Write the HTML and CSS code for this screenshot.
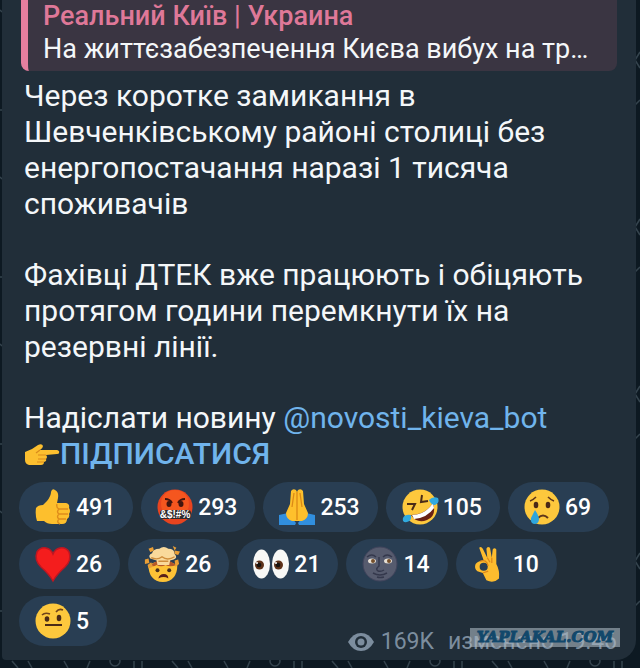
FILE: index.html
```
<!DOCTYPE html>
<html lang="uk">
   <head>
      <meta charset="utf-8">
      <title>Реальний Київ | Украина</title>
      <link rel="stylesheet" href="styles.css">
   </head>
   <body>
      <main class="message">
         <div class="reply">
            <div class="reply-name">Реальний Київ | Украина</div>
            <div class="reply-text">На життєзабезпечення Києва вибух на тр…</div>
         </div>
         <div class="text">
            <p>Через коротке замикання в<br>Шевченківському районі столиці без<br>енергопостачання наразі 1 тисяча<br>споживачів</p>
            <p>Фахівці ДТЕК вже працюють і обіцяють<br>протягом години перемкнути їх на<br>резервні лінії.</p>
            <p>Надіслати новину <a href="#bot">@novosti_kieva_bot</a><br><svg class="hand" viewBox="0 0 36 26"><path d="M1 10 L8 7 L14 3 Q18 1 19 4 Q19 6 16 8 L33 8 Q36 9 35 11 Q35 12 33 12 L22 13 Q24 15 22 17 Q23 19 20 20 Q20 23 17 23 L5 23 Q1 22 1 18 Z" fill="#fcbf2f"/><path d="M14 13 H22 M14 17 H22 M13 20 H20 M16 8 L12 11" stroke="#d98a1d" stroke-width="1.2" fill="none"/></svg><a class="subscribe" href="#subscribe">ПІДПИСАТИСЯ</a></p>
         </div>
         <div class="reactions">
            <button class="reaction">
               <svg viewBox="0 0 36 36"><path d="M1 19 Q3 16 8 16 L12 12 Q16 7 16 3 Q17 -1 20 1 Q24 3 23 9 L22 14 L31 14 Q35 15 34 19 Q36 22 34 25 Q35 28 32 30 Q32 35 27 35 L17 35 Q12 35 9 32 L2 32 Q0 26 1 19 Z" fill="#fdbf2d"/><path d="M33 20 H24 Q21 19 22 15 M33 25 H24 Q21 23 24 20 M31 30 H24 Q21 28 24 25 M25 35 Q21 33 24 30" stroke="#de8c1b" stroke-width="1.4" fill="none"/></svg>
               <span>491</span>
            </button>
            <button class="reaction">
               <svg viewBox="0 0 36 36"><circle cx="18" cy="18" r="17.5" fill="#e8441f"/><circle cx="18" cy="15" r="14" fill="#f5561f"/><path d="M8 10 Q13 10 15 14 M28 10 Q23 10 21 14" stroke="#42150f" stroke-width="2" fill="none"/><ellipse cx="12" cy="15" rx="2.5" ry="3" fill="#42150f"/><ellipse cx="24" cy="15" rx="2.5" ry="3" fill="#42150f"/><rect x="3" y="21" width="31" height="9" rx="3" fill="#302c2d"/><text class="curse" x="18" y="29" text-anchor="middle">&amp;$!#%</text></svg>
               <span>293</span>
            </button>
            <button class="reaction">
               <svg viewBox="0 0 36 36"><path d="M0 26 L9 24 L17 34 L16 36 L0 36 Z M36 26 L27 24 L19 34 L20 36 L36 36 Z" fill="#318fdf"/><path d="M12 2 Q14 -1 17 1 L18 3 L19 1 Q22 -1 24 2 L25 15 L29 24 Q29 30 23 32 L18 32 L13 32 Q7 30 7 24 L11 15 Z" fill="#fec02c"/><path d="M18 3 V31 M15 4 L13 18 M21 4 L23 18" stroke="#dc8a16" stroke-width="1.3" fill="none"/></svg>
               <span>253</span>
            </button>
            <button class="reaction">
               <svg viewBox="0 0 36 36"><circle cx="18" cy="18" r="17.5" fill="#fdc83d"/><path d="M5 15 L13 15 L10 21 M20 6 L19 13 L26 12" stroke="#4b2b17" stroke-width="2" fill="none"/><path d="M9 26 Q23 26 31 14 Q35 27 25 31 Q15 35 9 26 Z" fill="#6a2114"/><path d="M10 26 Q23 26 31 14 L32 19 Q25 29 12 30 Z" fill="#fff"/><path d="M27 11 Q31 7 36 9 Q38 14 33 16 Q29 16 27 11 Z M9 26 Q10 32 5 33 Q0 34 1 29 Q3 25 9 26 Z" fill="#30aae0"/></svg>
               <span>105</span>
            </button>
            <button class="reaction">
               <svg viewBox="0 0 36 36"><circle cx="18" cy="18" r="17.5" fill="#fdc83d"/><path d="M6 12 Q9 11 12 8 M24 8 Q27 11 30 12" stroke="#60361a" stroke-width="1.6" fill="none"/><ellipse cx="12" cy="16" rx="2.3" ry="3.3" fill="#4a2817"/><ellipse cx="24" cy="16" rx="2.3" ry="3.3" fill="#4a2817"/><path d="M14 29 Q19 24 24 29" stroke="#60361a" stroke-width="2" fill="none"/><path d="M11 21 Q15 27 15 30 Q15 35 10 35 Q6 34 7 29 Z" fill="#2fa5dc"/></svg>
               <span>69</span>
            </button>
            <button class="reaction">
               <svg viewBox="0 0 36 36"><path d="M18 35 Q14 28 6 21 Q-1 14 2 6 Q5 1 11 2 Q16 3 18 8 Q20 3 25 2 Q31 1 34 6 Q37 14 30 21 Q22 28 18 35 Z" fill="#f41d1d" stroke="#bd1722" stroke-width="1.5"/></svg>
               <span>26</span>
            </button>
            <button class="reaction">
               <svg class="wide" viewBox="0 0 40 42"><path d="M5 22 Q5 40 21 41 Q37 40 37 22 L30 19 H12 Z" fill="#fdc236"/><path d="M7 22 L14 18 H29 L36 22 Q29 25 24 22 Q19 25 14 22 Q10 25 7 22 Z" fill="#b65829"/><path d="M7 15 Q4 11 9 9 Q10 4 17 4 Q22 0 27 4 Q34 4 34 10 Q38 14 33 16 L29 17 L28 22 H15 L14 17 Z" fill="#f9d99b"/><path d="M8 14 Q15 17 20 13 Q26 18 34 13 M16 18 H27" stroke="#cf8d3c" stroke-width="1.5" fill="none"/><path d="M5 4 L10 2 L11 6 L7 8 Z M32 1 L36 3 L34 6 Z M1 16 L5 15 L6 20 L1 21 Z M34 6 L40 7 L38 11 L34 10 Z M4 22 L8 19 L10 24 L5 26 Z M34 17 L38 16 L39 21 L35 24 Z" fill="#e99e35"/><circle cx="15" cy="28" r="2.2" fill="#49301e"/><circle cx="28" cy="28" r="2.2" fill="#49301e"/><path d="M16 37 Q17 32 22 32 Q27 32 27 37 Q22 34 16 37 Z" fill="#5a2019"/></svg>
               <span>26</span>
            </button>
            <button class="reaction">
               <svg viewBox="0 0 36 36"><ellipse cx="8.5" cy="18" rx="8.5" ry="14.5" fill="#f8f8f6"/><ellipse cx="27.5" cy="18" rx="8.5" ry="14.5" fill="#f8f8f6"/><circle cx="6.5" cy="19" r="4.5" fill="#5d3119"/><circle cx="25.5" cy="19" r="4.5" fill="#5d3119"/><circle cx="6" cy="19" r="2.3" fill="#17120f"/><circle cx="25" cy="19" r="2.3" fill="#17120f"/><circle cx="4" cy="17" r="1" fill="#fff"/><circle cx="23" cy="17" r="1" fill="#fff"/></svg>
               <span>21</span>
            </button>
            <button class="reaction">
               <svg viewBox="0 0 36 36"><circle cx="18" cy="18" r="17" fill="#565b6e" stroke="#41445c"/><path d="M5 11 Q10 7 14 11 M21 11 Q25 7 30 11 M17 11 V20 Q13 23 16 25 Q19 26 22 24 M11 27 Q18 31 25 27 M15 31 Q18 32 22 31" stroke="#34384c" stroke-width="1.5" fill="none"/><ellipse cx="10" cy="15" rx="4" ry="2.5" fill="#e6dfd4"/><ellipse cx="26" cy="15" rx="4" ry="2.5" fill="#e6dfd4"/><circle cx="11" cy="15" r="2" fill="#75502c"/><circle cx="27" cy="15" r="2" fill="#75502c"/></svg>
               <span>14</span>
            </button>
            <button class="reaction">
               <svg class="wide" viewBox="0 0 40 42"><path d="M8 3 Q10 1 12 4 L17 14 L16 4 Q17 1 20 3 L22 14 L23 5 Q25 2 27 5 L27 21 Q31 28 30 37 Q24 43 16 39 L12 31 L6 29 Q2 26 4 21 Q7 17 13 17 Z" fill="#fdbc2e"/><circle cx="13" cy="24" r="4.5" fill="#293e53"/><path d="M17 14 L20 19 M22 14 L22 20 M18 29 L12 31 M9 18 Q16 15 18 23" stroke="#dc871c" stroke-width="1.4" fill="none"/></svg>
               <span>10</span>
            </button>
            <button class="reaction">
               <svg viewBox="0 0 36 36"><circle cx="18" cy="18" r="17.5" fill="#fdc83d"/><path d="M7 12 Q10 9 15 11 M21 9 Q24 5 28 7" stroke="#70431b" stroke-width="1.6" fill="none"/><ellipse cx="12" cy="16" rx="2.3" ry="2.8" fill="#4b2b17"/><ellipse cx="24" cy="15" rx="2.3" ry="3.2" fill="#4b2b17"/><path d="M10 22 H27" stroke="#4b2b17" stroke-width="2"/></svg>
               <span>5</span>
            </button>
         </div>
         <footer class="info">
            <svg class="eye" viewBox="0 0 26 20"><path d="M0 10 Q5 1 13 1 Q21 1 26 10 Q21 19 13 19 Q5 19 0 10 Z" fill="#7c8d9e"/><circle cx="13" cy="10" r="6" fill="#212e39"/><circle cx="13" cy="10" r="3.5" fill="#7c8d9e"/></svg>
            <span class="views">169K</span>
            <span>изменено 19:46</span>
            <span class="watermark">YAPLAKAL.COM</span>
         </footer>
      </main>
   </body>
</html>
```
FILE: styles.css
```
body {
   margin: 0;
   background: #0d1922 url("data:image/svg+xml,%3Csvg xmlns='http://www.w3.org/2000/svg' width='160' height='167'%3E%3Cg fill='none' stroke='%2334434d' stroke-width='1.5'%3E%3Cpath d='M12 160l6 7M28 160l4 7M64 160l4 7M90 160l-3 7M0 10l2 2M160 52l-5 8 5 8M160 100l-5 5M134 160v7M142 160v7M0 110h3'/%3E%3Ccircle cx='115' cy='160' r='5'/%3E%3C/g%3E%3C/svg%3E");
   font-family: Roboto, "Noto Sans", sans-serif;
   color: #f4f7f9;
}
.message {
   margin: 0 4px 6px 2px;
   padding: 0 19px 4px;
   background: #212e39;
   border-radius: 0 0 20px 4px;
}
.reply {
   padding: 0 15px 5px;
   border-left: 7px solid #e57f9f;
   border-radius: 0 0 8px 8px;
   background: #3a3542;
   font-size: 27px;
   line-height: 33px;
   white-space: nowrap;
}
.reply-name {
   color: #df7898;
   font-weight: 500;
}
.text {
   padding: 7px 3px 0;
   font-size: 30px;
   line-height: 36px;
   white-space: nowrap;
}
.text p {
   margin: 0 0 35px;
}
.text p:last-child {
   margin-bottom: 0;
}
a {
   color: #70b4ec;
   text-decoration: none;
}
.subscribe {
   font-weight: 500;
}
.hand {
   width: 36px;
   height: 26px;
   vertical-align: -4px;
}
.reactions {
   display: flex;
   flex-wrap: wrap;
   gap: 7px 8px;
   margin: 10px -2px 0;
}
.reaction {
   display: flex;
   align-items: center;
   gap: 5px;
   height: 50px;
   padding: 0 18px 0 16px;
   border: 0;
   border-radius: 25px;
   background: #293e53;
   color: #fff;
   font: 500 23px Roboto, sans-serif;
}
.reaction svg {
   width: 36px;
   height: 36px;
   overflow: visible;
}
.reaction .wide {
   height: 40px;
}
.curse {
   font: bold 10px "Liberation Sans", sans-serif;
   fill: #fff;
}
.info {
   position: relative;
   display: flex;
   align-items: center;
   justify-content: flex-end;
   margin-top: -18px;
   font-size: 23px;
   line-height: 28px;
   color: #7c8d9e;
}
.eye {
   width: 26px;
   height: 20px;
   margin-right: 7px;
}
.views {
   margin-right: 14px;
}
.watermark {
   position: absolute;
   right: -3px;
   top: 0;
   width: 150px;
   height: 19px;
   background: rgba(170, 184, 194, 0.6);
   color: #12486b;
   font: italic bold 15px/19px "DejaVu Serif", serif;
   text-align: center;
   -webkit-text-stroke: 1px #12486b;
}
```
